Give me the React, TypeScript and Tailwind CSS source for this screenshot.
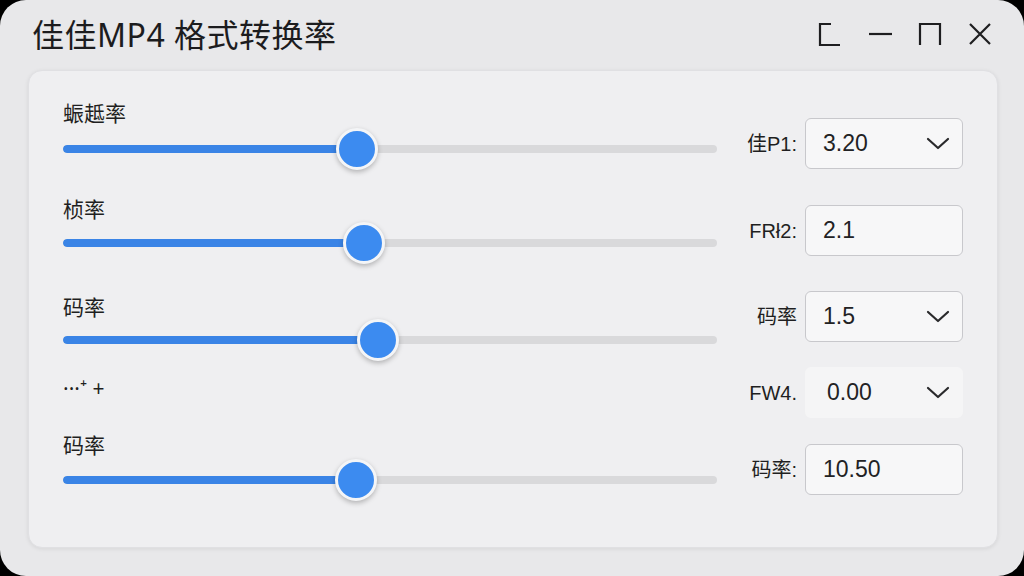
import React from "react";

type Row = {
  label: string;
  side: string;
  value: string;
  kind: "select" | "input" | "plain";
  pct?: number;
  rowClass: string;
  labelClass: string;
  sliderClass: string;
  boxClass: string;
};

const rows: Row[] = [
  {
    label: "蜄趆率",
    side: "佳P1:",
    value: "3.20",
    kind: "select",
    pct: 45,
    rowClass: "h-[96px]",
    labelClass: "pt-[1px]",
    sliderClass: "mt-[3px]",
    boxClass: "pt-[18px]",
  },
  {
    label: "桢率",
    side: "FRł2:",
    value: "2.1",
    kind: "input",
    pct: 46.1,
    rowClass: "h-[94px]",
    labelClass: "pt-[1px]",
    sliderClass: "mt-[1px]",
    boxClass: "pt-[9px]",
  },
  {
    label: "码率",
    side: "码率",
    value: "1.5",
    kind: "select",
    pct: 48.2,
    rowClass: "h-[76px]",
    labelClass: "pt-[5px]",
    sliderClass: "mt-0",
    boxClass: "pt-[1px]",
  },
  {
    label: "···⁺ +",
    side: "FW4.",
    value: "0.00",
    kind: "plain",
    rowClass: "h-[67px]",
    labelClass: "pt-[10px]",
    sliderClass: "mt-0",
    boxClass: "pt-[1px]",
  },
  {
    label: "码率",
    side: "码率:",
    value: "10.50",
    kind: "input",
    pct: 44.8,
    rowClass: "h-[80px]",
    labelClass: "pt-0",
    sliderClass: "mt-[2px]",
    boxClass: "pt-[11px]",
  },
];

const sideFont = {
  fontFamily: '"Liberation Sans", "Noto Sans CJK SC", sans-serif',
};

const Chevron = () => (
  <svg width="24" height="14" viewBox="0 0 24 14" fill="none">
    <path
      d="M2 2 L12 11 L22 2"
      stroke="#2a2a2c"
      strokeWidth="2.2"
      strokeLinecap="round"
      strokeLinejoin="round"
    />
  </svg>
);

const Slider = ({ pct }: { pct: number }) => (
  <div className="relative h-[42px] w-full flex items-center">
    <div className="h-[8px] w-full rounded-full bg-[#d9d9db] overflow-hidden">
      <div
        className="h-full rounded-full bg-[#3a84e6]"
        style={{ width: `${pct}%` }}
      />
    </div>
    {/* thumb */}
    <div
      className="absolute top-0 h-[42px] w-[42px] -translate-x-1/2 rounded-full bg-[#3c8bf0] border-[3px] border-[#f4f5f7] shadow-[0_2px_5px_rgba(0,0,0,0.25)]"
      style={{ left: `${pct}%` }}
    />
  </div>
);

const WindowControls = () => (
  <div className="flex items-center gap-[26px] pr-[32px]">
    <svg width="24" height="26" viewBox="0 0 24 26" fill="none">
      <path d="M13 2 H2 V23 H22" stroke="#1e1e20" strokeWidth="2.2" />
    </svg>
    <svg width="24" height="26" viewBox="0 0 24 26" fill="none">
      <path d="M1 12 H24" stroke="#1e1e20" strokeWidth="2.2" />
    </svg>
    <svg width="24" height="26" viewBox="0 0 24 26" fill="none">
      <path d="M2 23 V2 H22 V23" stroke="#1e1e20" strokeWidth="2.2" />
    </svg>
    <svg width="24" height="26" viewBox="0 0 24 26" fill="none">
      <path d="M2 2 L22 22 M22 2 L2 22" stroke="#1e1e20" strokeWidth="2.2" />
    </svg>
  </div>
);

export default function App() {
  return (
    <div
      className="w-[1024px] h-[576px] bg-black overflow-hidden"
      style={{ fontFamily: '"Noto Sans", "Noto Sans CJK SC", sans-serif' }}
    >
      <div className="w-full h-full rounded-[26px] bg-[#e8e8ea] flex flex-col">
        {/* title bar */}
        <div className="h-[70px] flex items-center justify-between shrink-0">
          <h1 className="pl-[32px] pb-[1px] text-[32px] leading-none text-[#1c1c1e] tracking-[0.5px]">
            佳佳MP4 格式转换率
          </h1>
          <WindowControls />
        </div>

        {/* panel */}
        <div className="ml-[28px] mr-[26px] h-[478px] rounded-[14px] bg-[#efeff1] border border-[#e0e0e3] shadow-[0_1px_4px_rgba(0,0,0,0.08)] pt-[29px] pl-[34px] pr-[34px]">
          {rows.map((r, i) => (
            <div key={i} className={`flex items-start ${r.rowClass}`}>
              <div className={`w-[654px] ${r.labelClass}`}>
                <div className="h-[24px] leading-[24px] text-[21px] text-[#1f1f21]">
                  {r.label}
                </div>
                {r.pct !== undefined && (
                  <div className={r.sliderClass}>
                    <Slider pct={r.pct} />
                  </div>
                )}
              </div>
              <div className={`flex items-start ${r.boxClass}`}>
                <div
                  className="w-[88px] h-[51px] pr-[8px] flex items-center justify-end text-[20px] text-[#1f1f21] whitespace-nowrap"
                  style={sideFont}
                >
                  {r.side}
                </div>
                <div
                  className={
                    r.kind === "plain"
                      ? "w-[158px] h-[51px] rounded-[6px] bg-[#f5f5f6] flex items-center justify-between pl-[22px] pr-[13px]"
                      : "w-[158px] h-[51px] rounded-[6px] bg-[#f7f7f8] border border-[#c8c8cc] flex items-center justify-between pl-[17px] pr-[12px]"
                  }
                >
                  <span
                    className="text-[23px] text-[#222224]"
                    style={sideFont}
                  >
                    {r.value}
                  </span>
                  {r.kind !== "input" && <Chevron />}
                </div>
              </div>
            </div>
          ))}
        </div>
      </div>
    </div>
  );
}
